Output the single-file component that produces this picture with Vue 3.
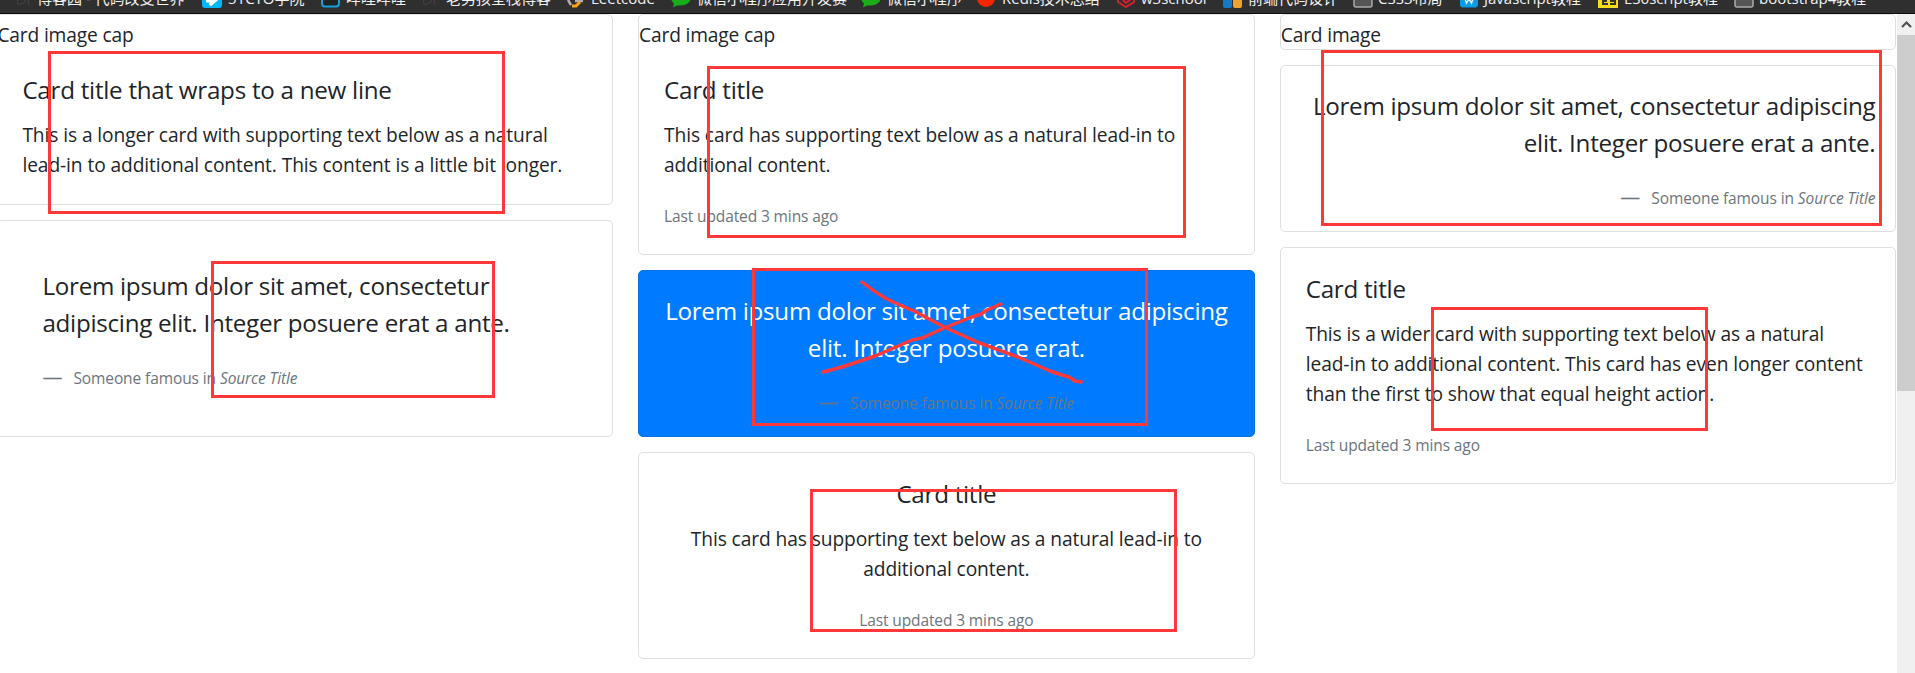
<script setup>
const bookmarks = [
  { icon: 'dark', label: '博客园 - 代码改变世界', t: 20, w: 185 },
  { icon: 'cto', label: '51CTO学院', t: 26, w: 119 },
  { icon: 'bili', label: '哔哩哔哩', t: 25, w: 102 },
  { icon: 'dark', label: '老男孩全栈博客', t: 23, w: 144 },
  { icon: 'leet', label: 'Leetcode', t: 24, w: 104 },
  { icon: 'chat', label: '微信小程序应用开发赛', t: 26, w: 190 },
  { icon: 'chat', label: '微信小程序', t: 26, w: 116 },
  { icon: 'redis', label: 'Redis技术总结', t: 25, w: 140 },
  { icon: 'w3', label: 'w3school', t: 24, w: 106 },
  { icon: 'front', label: '前端代码设计', t: 25, w: 130 },
  { icon: 'folder', label: 'CSS3布局', t: 25, w: 107 },
  { icon: 'js', label: 'Javascript教程', t: 24, w: 138 },
  { icon: 'es', label: 'ES6script教程', t: 26, w: 136 },
  { icon: 'folder', label: 'bootstrap4教程', t: 25, w: 140 },
]
// left, top, right, bottom of each red frame
const frames = [
  [48, 51, 505, 214], [211, 261, 495, 398], [707, 66, 1186, 238], [752, 268, 1148, 426],
  [810, 489, 1177, 632], [1321, 50, 1882, 226], [1431, 307, 1708, 431],
]
</script>

<template>
  <div class="page">
    <header class="bar">
      <div v-for="(b, i) in bookmarks" :key="i" class="bm" :style="{ width: b.w + 'px' }">
        <svg class="ico" :style="{ width: b.t + 'px' }" height="20" :viewBox="`0 0 ${b.t} 20`">
          <path v-if="b.icon === 'dark'" d="M1 12q-3 5 3 4q5-1 4-5M12 17q-2-4 1-7" fill="none" stroke="#474343" stroke-width="1.2" />
          <g v-else-if="b.icon === 'cto'"><rect width="20" height="20" rx="3" fill="#00b8ff" /><path d="M4 13h6l-2 4 7-6" fill="none" stroke="#fff" stroke-width="3" /></g>
          <rect v-else-if="b.icon === 'bili'" x="1" y="4" width="17" height="14.5" rx="3" fill="#222" stroke="#159fdc" stroke-width="2" />
          <g v-else-if="b.icon === 'leet'" fill="none"><path d="M1 12l3 5M8 13h8" stroke="#b3b1b0" stroke-width="2.500" /><path d="M5 18l4 0 4-4" stroke="#ffa116" stroke-width="3" /></g>
          <path v-else-if="b.icon === 'chat'" d="M2 19.500l1-4Q0 13 0 10q2-8 10-8t10 8q-1 8-14 7.500z" fill="#1aad19" />
          <circle v-else-if="b.icon === 'redis'" cx="9" cy="10" r="9" fill="#f52500" />
          <path v-else-if="b.icon === 'w3'" d="M1 8v6l8 5 8-5V8M6 12l3 3 5-4" fill="none" stroke="#d8212d" stroke-width="2" />
          <g v-else-if="b.icon === 'front'"><rect y="8" width="9" height="12" rx="2" fill="#1579c4" /><rect x="10" y="8" width="9" height="12" rx="2" fill="#efa22d" /></g>
          <rect v-else-if="b.icon === 'folder'" x="1" y="4" width="18" height="15" rx="2" fill="#555" stroke="#aaa" stroke-width="1.500" />
          <g v-else-if="b.icon === 'js'"><rect width="18" height="19.500" rx="3" fill="#099be5" /><path d="M5 11l1.500 4L9 11l2.500 4 1.500-4" fill="none" stroke="#d9f1fc" stroke-width="1.500" /></g>
          <g v-else><rect width="20" height="20" fill="#f5de19" /><path d="M10 10H5v6h5M5 13h4M17 10h-4v3h4v3h-5" fill="none" stroke="#333" stroke-width="2" /></g>
        </svg>
        <span>{{ b.label }}</span>
      </div>
    </header>

    <main class="view">
      <div class="columns">
        <section class="col">
          <article class="card">
            <div class="cap">Card image cap</div>
            <div class="body">
              <h5 class="title">Card title that wraps to a new line</h5>
              <p class="text">This is a longer card with supporting text below as a natural<br>lead-in to additional content. This content is a little bit longer.</p>
            </div>
          </article>
          <article class="card deep">
            <blockquote class="quote">
              <p>Lorem ipsum dolor sit amet, consectetur<br>adipiscing elit. Integer posuere erat a ante.</p>
              <footer><span class="dash">—</span>Someone famous in <cite>Source Title</cite></footer>
            </blockquote>
          </article>
        </section>
        <section class="col">
          <article class="card">
            <div class="cap">Card image cap</div>
            <div class="body">
              <h5 class="title">Card title</h5>
              <p class="text">This card has supporting text below as a natural lead-in to<br>additional content.</p>
              <p class="note">Last updated 3 mins ago</p>
            </div>
          </article>
          <article class="card pad primary center">
            <blockquote class="quote">
              <p>Lorem ipsum dolor sit amet, consectetur adipiscing<br>elit. Integer posuere erat.</p>
              <footer><span class="dash">—</span>Someone famous in <cite>Source Title</cite></footer>
            </blockquote>
          </article>
          <article class="card center">
            <div class="body">
              <h5 class="title">Card title</h5>
              <p class="text">This card has supporting text below as a natural lead-in to<br>additional content.</p>
              <p class="note">Last updated 3 mins ago</p>
            </div>
          </article>
        </section>
        <section class="col">
          <article class="card"><div class="cap">Card image</div></article>
          <article class="card pad right">
            <blockquote class="quote">
              <p>Lorem ipsum dolor sit amet, consectetur adipiscing<br>elit. Integer posuere erat a ante.</p>
              <footer><span class="dash">—</span>Someone famous in <cite>Source Title</cite></footer>
            </blockquote>
          </article>
          <article class="card">
            <div class="body">
              <h5 class="title">Card title</h5>
              <p class="text">This is a wider card with supporting text below as a natural<br>lead-in to additional content. This card has even longer content<br>than the first to show that equal height action.</p>
              <p class="note">Last updated 3 mins ago</p>
            </div>
          </article>
        </section>
      </div>
      <aside class="scroll">
        <svg width="18" height="21" viewBox="0 0 18 21"><path d="M5 13l4.500-4.500L14 13" fill="none" stroke="#505050" stroke-width="2.200" /></svg>
        <div class="thumb"></div>
      </aside>
    </main>

    <svg class="marks" width="1915" height="673" viewBox="0 0 1915 673" fill="none" stroke="#ff3939" stroke-width="3">
      <rect v-for="(f, i) in frames" :key="i" :x="f[0] + 1.5" :y="f[1] + 1.5" :width="f[2] - f[0] - 3" :height="f[3] - f[1] - 3" />
      <g stroke-width="3.500" stroke-linecap="round" stroke-linejoin="round">
        <path d="M862 282Q873 291 885 298L893 302L916 312L944 327L977 342L1018 357L1050 371L1062 375L1069 377L1075 381L1081 382" />
        <path d="M823 372L842 367L875 356L912 340L922 338L944 328L969 318L981 314L987 310L1001 304" />
      </g>
    </svg>
  </div>
</template>

<style>
body { margin: 0; background: #fff; }
</style>

<style scoped>
* { box-sizing: border-box; }
.page { position: relative; width: 1915px; height: 673px; overflow: hidden; display: flex; flex-direction: column; color: #212529; font-family: "Open Sans", "Noto Sans", sans-serif; }
.bar { height: 14px; flex: none; display: flex; padding-left: 17px; background: #2f2f30; border-bottom: 1px solid #0c0c0c; overflow: hidden; color: #f2f2f2; font-family: "Open Sans", "Noto Sans CJK SC", sans-serif; font-size: 15px; line-height: 20px; }
.bm { flex: none; display: flex; height: 20px; margin-top: -12px; white-space: nowrap; }
.ico { flex: none; }
.view { flex: 1; min-height: 0; display: flex; }
.columns { flex: 1; display: flex; gap: 25px; margin-left: -3.6px; }
.col { width: 616.67px; flex: none; display: flex; flex-direction: column; gap: 15px; white-space: nowrap; }
.card { border: 1px solid #dfdfdf; border-radius: 5px; background: #fff; }
.cap { height: 34px; padding-top: 5px; font-size: 19.2px; letter-spacing: -0.16px; line-height: 30px; }
.body { padding: 26px 25px 24px; }
.title { margin: 0 0 15px; font-size: 24.2px; font-weight: 400; line-height: 30px; letter-spacing: -0.27px; }
.text { margin: 0; font-size: 19.2px; line-height: 30px; letter-spacing: -0.1px; }
.note { margin: 21px 0 -1px; font-size: 15.5px; line-height: 30px; letter-spacing: -0.12px; color: #6c757d; }
.pad { padding: 20px; }
.deep { padding: 45px; }
.quote { margin: 0; padding-top: 1px; }
.quote p { margin: 0 0 22px; font-size: 24.2px; line-height: 37px; letter-spacing: -0.28px; }
.quote footer { height: 28px; font-size: 15.5px; line-height: 30px; letter-spacing: -0.1px; color: #6c757d; }
.dash { display: inline-block; width: 31px; text-align: left; font-size: 20px; line-height: 20px; }
.center { text-align: center; }
.right { text-align: right; }
.primary { background: #007bff; color: #fff; border-color: #0a70de; }
.scroll { width: 18px; flex: none; background: #f0f0f0; }
.scroll svg { display: block; }
.thumb { height: 356px; background: #cdcdcd; }
.marks { position: absolute; left: 0; top: 0; }
</style>
